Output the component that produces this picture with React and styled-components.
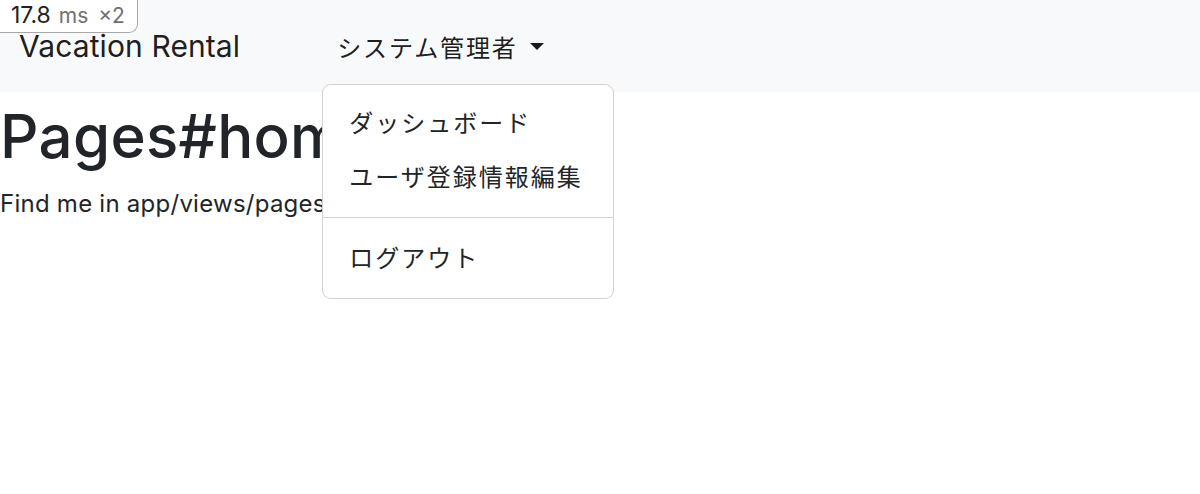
import React from "react";
import styled, { createGlobalStyle } from "styled-components";

const GlobalStyle = createGlobalStyle`
  html, body {
    margin: 0;
    padding: 0;
    background: #fff;
  }
  body {
    font-family: Inter, "Noto Sans CJK JP", "Liberation Sans", sans-serif;
    color: #212529;
  }
  #root {
    min-height: 100vh;
  }
`;

const Navbar = styled.nav`
  display: flex;
  align-items: center;
  height: 92px;
  padding: 0 18px;
  background: #f8f9fa;
  box-sizing: border-box;
`;

const Brand = styled.a`
  font-size: 30px;
  color: rgba(0, 0, 0, 0.9);
  text-decoration: none;
  margin-right: 97px;
  padding-left: 1px;
  letter-spacing: 0.1px;
`;

const NavItem = styled.div`
  position: relative;
`;

const NavLink = styled.a`
  display: flex;
  align-items: center;
  font-size: 24px;
  letter-spacing: 1.9px;
  color: rgba(0, 0, 0, 0.9);
  text-decoration: none;
  padding: 10px 0;
  cursor: pointer;

  &::after {
    content: "";
    display: inline-block;
    margin-left: 12px;
    border-top: 7px solid;
    border-left: 7px solid transparent;
    border-right: 7px solid transparent;
  }
`;

const Menu = styled.ul`
  position: absolute;
  top: 65px;
  left: -15px;
  width: 292px;
  margin: 0;
  padding: 12px 0;
  list-style: none;
  background: #fff;
  border: 1.5px solid rgba(0, 0, 0, 0.175);
  border-radius: 9px;
  box-sizing: border-box;
  z-index: 10;
`;

const MenuItem = styled.li`
  display: block;
  padding: 9px 26px;
  font-size: 24px;
  line-height: 36px;
  letter-spacing: 2px;
  color: #212529;
  white-space: nowrap;
`;

const Divider = styled.li`
  height: 0;
  margin: 12px 0 14px;
  border-top: 1.5px solid rgba(0, 0, 0, 0.175);
`;

const Main = styled.main`
  padding: 0;
`;

const Title = styled.h1`
  margin: 0;
  padding-top: 8px;
  font-size: 60px;
  font-weight: 500;
  line-height: 72px;
  letter-spacing: 0.3px;
  color: #212529;
`;

const Lead = styled.p`
  margin: 14px 0 0;
  font-size: 24px;
  line-height: 36px;
  letter-spacing: 0.25px;
  color: #212529;
`;

const Profiler = styled.div`
  position: fixed;
  top: 0;
  left: 0;
  display: flex;
  align-items: baseline;
  gap: 8px;
  height: 33px;
  padding: 0 12px 0 11px;
  background: #fff;
  border: 1.5px solid #a8a8a8;
  border-top: none;
  border-left: none;
  border-bottom-right-radius: 9px;
  box-sizing: border-box;
  font-family: Inter, "Liberation Sans", sans-serif;
  font-size: 23px;
  line-height: 31px;
  z-index: 20;
`;

const Time = styled.span`
  color: #222;
`;

const Unit = styled.span`
  color: #707070;
  font-size: 21px;
  word-spacing: 4px;
`;

export default function App() {
  return (
    <>
      <GlobalStyle />
      <Navbar>
        <Brand>Vacation Rental</Brand>
        <NavItem>
          <NavLink>システム管理者</NavLink>
          <Menu>
            <MenuItem>ダッシュボード</MenuItem>
            <MenuItem>ユーザ登録情報編集</MenuItem>
            <Divider />
            <MenuItem>ログアウト</MenuItem>
          </Menu>
        </NavItem>
      </Navbar>
      <Main>
        <Title>Pages#home</Title>
        <Lead>Find me in app/views/pages/home.html.erb</Lead>
      </Main>
      <Profiler>
        <Time>17.8</Time>
        <Unit>ms ×2</Unit>
      </Profiler>
    </>
  );
}
